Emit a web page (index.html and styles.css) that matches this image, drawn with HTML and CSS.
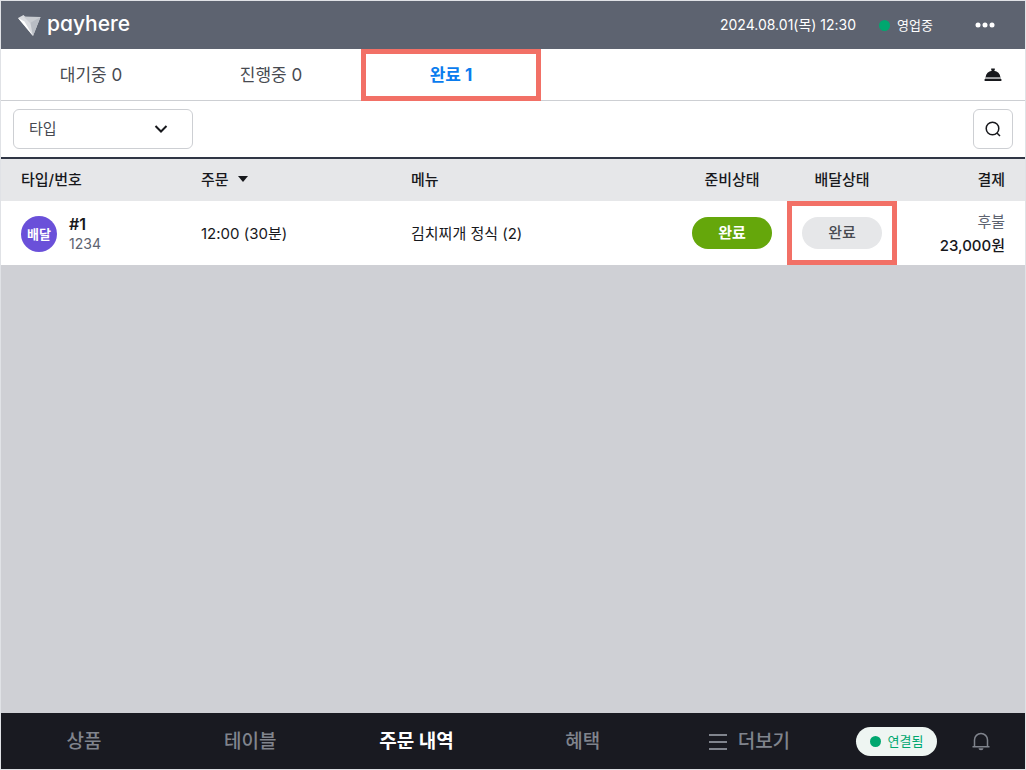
FILE: index.html
```html
<!DOCTYPE html>
<html lang="ko">
<head>
<meta charset="utf-8">
<meta name="viewport" content="width=device-width, initial-scale=1">
<title>payhere</title>
<link rel="stylesheet" href="styles.css">
</head>
<body>
<div class="app">
  <header class="topbar">
    <div class="brand">
      <svg class="brand-mark" width="24" height="24" viewBox="0 0 24 24" aria-hidden="true">
        <path fill="#d9dbdf" d="M0 5 5.500 2 8 4.500 22.500 4 15 23z"/>
        <path fill="#b9bdc4" d="M12 8 22.500 4 15 23z"/>
        <path fill="#c9ccd1" d="M5.500 3.500 22.500 4 12 10z"/>
        <path fill="#fff" d="M0 5 6.500 8.500 15 23z"/>
      </svg>
      <span class="brand-name">payhere</span>
    </div>
    <time class="clock">2024.08.01(목) 12:30</time>
    <span class="open-state"><span class="dot"></span>영업중</span>
    <button class="icon-button dots" type="button" aria-label="메뉴">
      <svg width="20" height="6" viewBox="0 0 20 6" fill="#fff"><circle cx="3" cy="3" r="2.500"/><circle cx="10" cy="3" r="2.500"/><circle cx="17" cy="3" r="2.500"/></svg>
    </button>
  </header>

  <nav class="tabs">
    <button class="tab" type="button">대기중 0</button>
    <button class="tab" type="button">진행중 0</button>
    <button class="tab active" type="button">완료 1</button>
    <button class="icon-button call" type="button" aria-label="호출">
      <svg width="18" height="16" viewBox="0 0 18 16"><path fill="#17181c" d="M7.200 1.500h3.600v1.500l-.7.800c3.500.5 5.900 2.900 6.400 6.700h-15c.5-3.800 2.900-6.200 6.400-6.700l-.7-.8z"/><path fill="#a3a4a7" d="M1 10.500h16v1.500H1z"/><path fill="#17181c" d="M.6 12h16.800v2H.6z"/></svg>
    </button>
  </nav>

  <div class="filters">
    <div class="select-wrap">
      <select class="select" aria-label="타입"><option>타입</option></select>
      <svg class="chevron" width="14" height="10" viewBox="0 0 14 10" fill="none" stroke="#17181c" stroke-width="2"><path d="M1.500 2 7 7.500 12.500 2"/></svg>
    </div>
    <button class="search" type="button" aria-label="검색">
      <svg width="18" height="18" viewBox="0 0 18 18" fill="none" stroke="#17181c" stroke-width="1.500"><circle cx="8.500" cy="8.500" r="6.300"/><path d="m13 13 3 3"/></svg>
    </button>
  </div>

  <main class="content">
    <table class="orders">
      <colgroup><col class="c-type"><col class="c-order"><col class="c-menu"><col class="c-state"><col class="c-state"><col class="c-pay"></colgroup>
      <thead>
        <tr>
          <th>타입/번호</th>
          <th>주문<svg class="sort" width="10" height="6" viewBox="0 0 10 6"><path fill="#17181c" d="M0 0h10L5 6z"/></svg></th>
          <th>메뉴</th>
          <th class="center">준비상태</th>
          <th class="center">배달상태</th>
          <th class="right">결제</th>
        </tr>
      </thead>
      <tbody>
        <tr>
          <td>
            <div class="order-id">
              <span class="type-badge">배달</span>
              <div><div class="number">#1</div><div class="code">1234</div></div>
            </div>
          </td>
          <td>12:00 (30분)</td>
          <td>김치찌개 정식 (2)</td>
          <td class="center"><button class="pill ready" type="button">완료</button></td>
          <td class="center marked"><button class="pill" type="button">완료</button></td>
          <td class="right"><div class="method">후불</div><div class="price">23,000원</div></td>
        </tr>
      </tbody>
    </table>
  </main>

  <nav class="bottom">
    <a class="item" href="#">상품</a>
    <a class="item" href="#">테이블</a>
    <a class="item current" href="#">주문 내역</a>
    <a class="item" href="#">혜택</a>
    <a class="item" href="#"><svg width="20" height="18" viewBox="0 0 20 18" stroke="#80848d" stroke-width="2"><path d="M1 2h18M1 9h18M1 16h18"/></svg>더보기</a>
    <div class="status">
      <span class="connected"><span class="dot"></span>연결됨</span>
      <button class="icon-button" type="button" aria-label="알림">
        <svg width="20" height="20" viewBox="0 0 20 20" fill="none" stroke="#80848d" stroke-width="1.500"><path d="M3.500 15.500V9a6.500 6.500 0 0 1 13 0v6.500M1.500 15.700h17"/><path fill="#80848d" stroke="none" d="M7.500 17.300h5a2.500 2 0 0 1-5 0z"/></svg>
      </button>
    </div>
  </nav>
</div>
</body>
</html>
```
FILE: styles.css
```css
* { box-sizing: border-box; }

body {
  margin: 0;
  background: #e0e2e6;
  color: #17181c;
  font-family: Inter, "Noto Sans CJK KR", sans-serif;
  font-size: 15px;
  line-height: 20px;
}

button, select {
  font: inherit;
  color: inherit;
}

button {
  padding: 0;
  border: 0;
  background: none;
}

svg { display: block; }

.app {
  display: flex;
  flex-direction: column;
  min-height: 100vh;
  padding: 1px;
}

.icon-button {
  display: flex;
  align-items: center;
  justify-content: center;
}

.dot {
  width: 11px;
  height: 11px;
  border-radius: 50%;
  background: #00a76f;
}

.topbar {
  display: flex;
  align-items: center;
  height: 48px;
  padding: 0 30px 0 17px;
  background: #5d6370;
  color: #fff;
  font-size: 14px;
}

.brand {
  display: flex;
  align-items: center;
  gap: 5px;
  margin-right: auto;
}

.brand-name {
  padding-bottom: 2px;
  font-size: 21px;
  font-weight: 500;
  line-height: 28px;
  font-feature-settings: "cv11";
}

.open-state {
  display: flex;
  align-items: center;
  gap: 7px;
  margin: 0 42px 0 23px;
  font-size: 13px;
}

.tabs {
  display: flex;
  height: 52px;
  border-bottom: 1px solid #cdcfd3;
  background: #fff;
}

.tab {
  width: 180px;
  color: #474a51;
  font-size: 17px;
}

.tab.active {
  height: 52px;
  border: 5px solid #f27066;
  color: #0a7cee;
  font-weight: 700;
}

.call { margin: 0 23px 0 auto; }

.filters {
  display: flex;
  align-items: center;
  justify-content: space-between;
  height: 56px;
  padding: 0 12px;
  background: #fff;
}

.select-wrap {
  position: relative;
  width: 180px;
}

.select {
  appearance: none;
  width: 100%;
  height: 40px;
  padding: 0 15px;
  border: 1px solid #cdcfd3;
  border-radius: 6px;
  background: #fff;
  color: #474a51;
}

.chevron {
  position: absolute;
  top: 15px;
  right: 25px;
  pointer-events: none;
}

.search {
  display: grid;
  place-items: center;
  width: 40px;
  height: 40px;
  border: 1px solid #cdcfd3;
  border-radius: 6px;
}

.content {
  flex: 1;
  background: #cfd0d5;
}

.orders {
  width: 100%;
  border-collapse: collapse;
  table-layout: fixed;
  background: #fff;
}

.c-type { width: 190px; }
.c-order { width: 210px; }
.c-state { width: 110px; }
.c-pay { width: 128px; }

.orders thead {
  border-top: 2px solid #303645;
  background: #e6e7e9;
}

.orders th {
  height: 43px;
  padding: 0 10px;
  font-weight: 500;
  text-align: left;
}

.orders td {
  height: 64px;
  padding: 2px 10px 0;
}

.orders th:first-child, .orders td:first-child { padding-left: 20px; }
.orders th:last-child, .orders td:last-child { padding-right: 20px; }
.orders .center { text-align: center; }
.orders td.center { padding: 0; }
.orders .right { text-align: right; }

.sort {
  display: inline-block;
  margin-left: 9px;
  vertical-align: 3px;
}

.order-id {
  display: flex;
  align-items: center;
  gap: 12px;
}

.type-badge {
  display: grid;
  place-items: center;
  width: 36px;
  height: 36px;
  border-radius: 50%;
  background: #6a50d9;
  color: #fff;
  font-size: 13px;
  font-weight: 700;
}

.number {
  font-size: 16px;
  font-weight: 600;
}

.code {
  color: #5d6370;
  font-size: 14px;
}

.pill {
  width: 80px;
  height: 32px;
  border-radius: 16px;
  background: #e6e7e9;
  color: #474a51;
  font-weight: 500;
}

.pill.ready {
  background: #65a70b;
  color: #fff;
  font-weight: 700;
}

.orders .marked { box-shadow: inset 0 0 0 5px #f27066; }

.method {
  color: #5d6370;
  line-height: 24px;
}

.price {
  font-weight: 500;
  line-height: 24px;
}

.bottom {
  display: grid;
  grid-template-columns: repeat(5, 1fr) 193px;
  height: 56px;
  background: #191a21;
  font-size: 19px;
  font-weight: 500;
}

.item {
  display: flex;
  align-items: center;
  justify-content: center;
  gap: 10px;
  padding-top: 2px;
  color: #80848d;
  text-decoration: none;
}

.item.current {
  color: #fff;
  font-weight: 700;
}

.status {
  display: flex;
  align-items: center;
  justify-content: space-between;
  padding: 0 34px 0 24px;
}

.connected {
  display: flex;
  align-items: center;
  justify-content: center;
  gap: 7px;
  width: 81px;
  height: 29px;
  border-radius: 16px;
  background: #eef5f2;
  color: #00a76f;
  font-size: 13px;
  font-weight: 400;
}
```
